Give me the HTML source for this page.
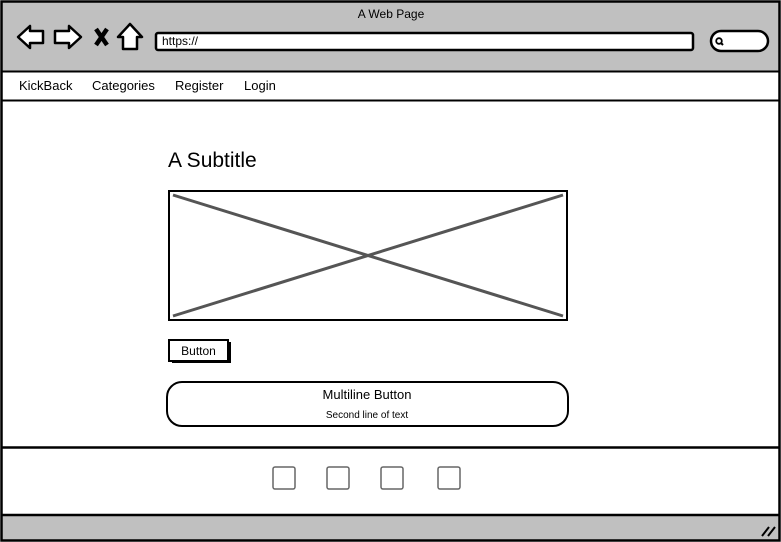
<!DOCTYPE html>
<html><head><meta charset="utf-8"><style>
html,body{margin:0;padding:0;width:781px;height:542px;overflow:hidden;background:#fff}
svg{display:block}
text{font-family:"Liberation Sans",sans-serif;fill:#000}
</style></head><body>
<svg width="781" height="542" viewBox="0 0 781 542" xmlns="http://www.w3.org/2000/svg">
<rect x="0" y="0" width="781" height="542" fill="#fff"/>
<rect x="1" y="1" width="779" height="70" fill="#c0c0c0"/>
<rect x="1" y="515" width="779" height="26" fill="#c0c0c0"/>
<rect x="1.5" y="1.5" width="778" height="539" fill="none" stroke="#000" stroke-width="2.5"/>
<text x="391" y="18" font-size="12" text-anchor="middle">A Web Page</text>
<path d="M18 37 L30 26 L30 31 L43 31 L43 43 L30 43 L30 48 Z" fill="#fff" stroke="#000" stroke-width="2.5" stroke-linejoin="round"/>
<path d="M81 37 L69 26 L69 31 L55 31 L55 43 L69 43 L69 48 Z" fill="#fff" stroke="#000" stroke-width="2.5" stroke-linejoin="round"/>
<path d="M96 29 L107 45 M107 29 L96 45" stroke="#000" stroke-width="4.5"/>
<path d="M130 24 L142 37 L137 37 L137 49 L123 49 L123 37 L118 37 Z" fill="#fff" stroke="#000" stroke-width="2.5" stroke-linejoin="round"/>
<rect x="156" y="33" width="537" height="17" rx="2" fill="#fff" stroke="#000" stroke-width="2.5"/>
<text x="162" y="45" font-size="12">https://</text>
<rect x="711" y="31" width="57" height="20" rx="10" fill="#fff" stroke="#000" stroke-width="2.5"/>
<circle cx="719" cy="41" r="2.8" fill="none" stroke="#000" stroke-width="1.8"/>
<path d="M721 43 L723 45" stroke="#000" stroke-width="2"/>
<path d="M1 71.5 H780 M1 100.5 H780" stroke="#000" stroke-width="2"/>
<text x="19" y="90" font-size="13">KickBack</text>
<text x="92" y="90" font-size="13">Categories</text>
<text x="175" y="90" font-size="13">Register</text>
<text x="244" y="90" font-size="13">Login</text>
<text x="168" y="167" font-size="21">A Subtitle</text>
<rect x="169" y="191" width="398" height="129" fill="#fff" stroke="#000" stroke-width="2"/>
<path d="M173 195 L563 316 M563 195 L173 316" stroke="#555" stroke-width="3"/>
<rect x="172" y="342" width="59" height="21" fill="#000"/>
<rect x="169" y="340" width="59" height="21" fill="#fff" stroke="#000" stroke-width="2"/>
<text x="198.5" y="355" font-size="12" text-anchor="middle">Button</text>
<rect x="167" y="382" width="401" height="44" rx="15" fill="#fff" stroke="#000" stroke-width="2"/>
<text x="367" y="399" font-size="13" text-anchor="middle">Multiline Button</text>
<text x="367" y="418" font-size="10" text-anchor="middle">Second line of text</text>
<path d="M1 447.5 H780 M1 515 H780" stroke="#000" stroke-width="2.5"/>
<g fill="none" stroke="#666" stroke-width="1.5">
<rect x="273" y="467" width="22" height="22" rx="2"/>
<rect x="327" y="467" width="22" height="22" rx="2"/>
<rect x="381" y="467" width="22" height="22" rx="2"/>
<rect x="438" y="467" width="22" height="22" rx="2"/>
</g>
<path d="M762 536 L769 527 M768 536 L775 527" stroke="#000" stroke-width="2"/>
</svg>
</body></html>
